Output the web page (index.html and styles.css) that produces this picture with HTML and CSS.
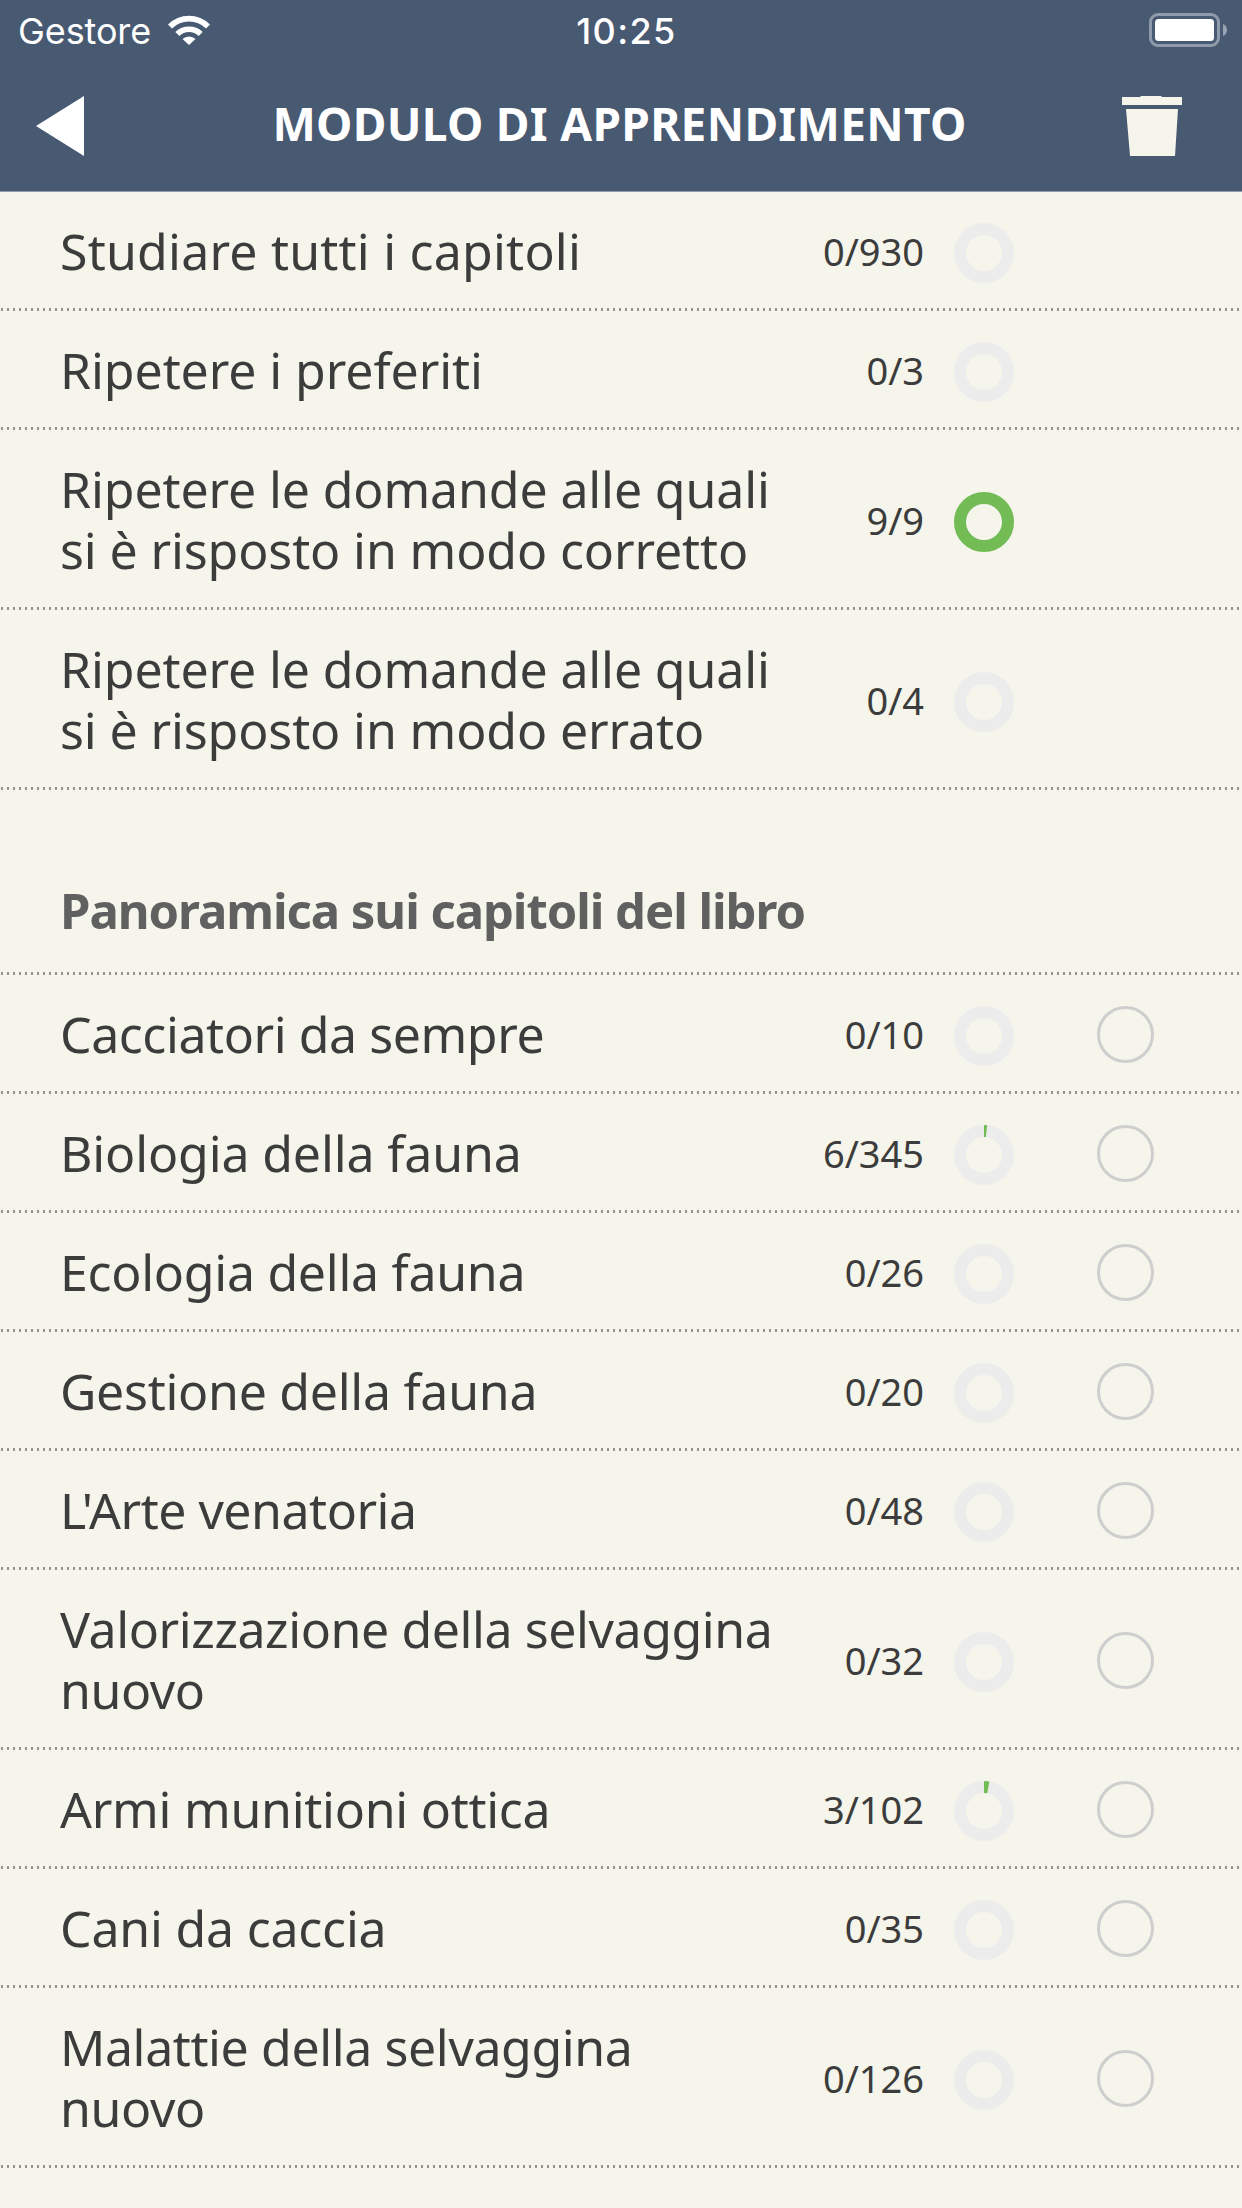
FILE: index.html
```html
<!DOCTYPE html>
<html lang="it">
<head>
    <meta charset="UTF-8">
    <meta name="viewport" content="width=device-width, initial-scale=1.0">
    <title>Modulo di apprendimento</title>
    <link rel="stylesheet" href="styles.css">
</head>
<body>
    <header>
        <div class="status-bar">
            <div class="carrier">
                <span>Gestore</span>
                <svg class="wifi" viewBox="0 0 42 30" width="42" height="30">
                    <path d="M0 9.5A29.5 29.5 0 0 1 42 9.5L38 13.500A24 24 0 0 0 4 13.500Z"/>
                    <path d="M7.300 17A19.500 19.500 0 0 1 34.700 17L30.600 21A13.700 13.700 0 0 0 11.400 21Z"/>
                    <path d="M14.500 24A9.500 9.500 0 0 1 27.500 24L21 30Z"/>
                </svg>
            </div>
            <div class="clock">10:25</div>
            <svg class="battery" viewBox="0 0 78 34" width="78" height="34">
                <rect x="1.500" y="1.500" width="68" height="31" rx="7.500" class="battery-frame"/>
                <rect x="6" y="6" width="59" height="22" rx="3.500" fill="#fff"/>
                <path d="M74 11c2.500 1 4 3.300 4 6s-1.500 5-4 6z" class="battery-tip"/>
            </svg>
        </div>
        <nav>
            <svg class="back" viewBox="0 0 48 60" width="48" height="60"><path d="M48 0v60L0 30z"/></svg>
            <h1>MODULO DI APPRENDIMENTO</h1>
            <svg class="trash" viewBox="0 0 60 60" width="60" height="60">
                <path d="M0 1h18l1-1h20l1 1h20v8H0zM4 13h52l-3 47H8z"/>
            </svg>
        </nav>
    </header>

    <main>
        <ul class="list" id="reviewList"></ul>
        <h2>Panoramica sui capitoli del libro</h2>
        <ul class="list" id="chapterList"></ul>
    </main>

    <script src="script.js"></script>
</body>
</html>
```
FILE: styles.css
```css
body {
    margin: 0;
    height: 2208px;
    overflow: hidden;
    font-family: "Noto Sans", sans-serif;
    background-color: #f5f5eb;
    color: #3c3c3c;
}
header {
    height: 191px;
    background-color: #485972;
    border-bottom: 1px solid #949dab;
    color: #fff;
}
.status-bar {
    display: grid;
    grid-template-columns: 1fr auto 1fr;
    align-items: center;
    height: 60px;
    padding: 0 15px 0 18px;
    font-family: Inter, sans-serif;
    font-size: 36px;
}
.carrier {
    display: flex;
    align-items: center;
    gap: 17px;
    letter-spacing: -0.1px;
}
.carrier span,
.clock {
    padding-top: 2px;
}
.wifi,
.back {
    fill: #fff;
}
.clock {
    padding-left: 8px;
    font-weight: 500;
    letter-spacing: 1.4px;
}
.battery {
    justify-self: end;
}
.battery-frame {
    fill: none;
    stroke: #8f9bab;
    stroke-width: 3;
}
.battery-tip {
    fill: #9aa4b2;
}
nav {
    display: flex;
    align-items: center;
    height: 132px;
    padding: 0 60px 0 36px;
}
h1 {
    flex: 1;
    margin: -6px 0 0;
    padding-left: 33px;
    font-size: 46px;
    line-height: 64px;
    letter-spacing: 0.3px;
    text-align: center;
    white-space: nowrap;
}
.trash {
    fill: #f5f5eb;
}
.list {
    margin: 0;
    padding: 0;
    list-style: none;
}
.list li,
h2 {
    /* dotted line under every row */
    background: repeating-linear-gradient(to right, transparent 0 1px, #92938c 1px 3px, transparent 3px 6px) left bottom / 100% 3px no-repeat;
}
.list li {
    display: flex;
    align-items: center;
    padding: 31px 88px 27px 60px;
}
.name {
    flex: 1;
    margin: -2px 0 2px;
    font-size: 50px;
    line-height: 61px;
    white-space: nowrap;
}
.count {
    margin: -2px 30px 2px 0;
    font-size: 38px;
    line-height: 61px;
}
.ring {
    width: 60px;
    height: 60px;
    margin: 0 83px 1px 0;
    fill: none;
    stroke: #ececec;
    stroke-width: 12;
}
.ring .done {
    stroke: #73bb54;
}
.check {
    box-sizing: border-box;
    width: 57px;
    height: 57px;
    margin-bottom: 4px;
    border: 3px solid #cecece;
    border-radius: 50%;
}
.check.hidden {
    visibility: hidden;
}
h2 {
    margin: 0;
    padding: 90px 60px 34px;
    font-size: 49px;
    line-height: 61px;
    letter-spacing: -1.05px;
    color: #606060;
}
```
FILE: script.js
```js
// name, answered, total, letter spacing of the name in px
const review = [
    ["Studiare tutti i capitoli", 0, 930, 0.22],
    ["Ripetere i preferiti", 0, 3, -0.08],
    ["Ripetere le domande alle quali<br>si è risposto in modo corretto", 9, 9, -0.12],
    ["Ripetere le domande alle quali<br>si è risposto in modo errato", 0, 4, -0.12]
];

const chapters = [
    ["Cacciatori da sempre", 0, 10, -0.43],
    ["Biologia della fauna", 6, 345, -0.14],
    ["Ecologia della fauna", 0, 26, -0.28],
    ["Gestione della fauna", 0, 20, -0.28],
    ["L'Arte venatoria", 0, 48, -0.48],
    ["Valorizzazione della selvaggina<br>nuovo", 0, 32, -0.41],
    ["Armi munitioni ottica", 3, 102, -0.27],
    ["Cani da caccia", 0, 35, -0.2],
    ["Malattie della selvaggina<br>nuovo", 0, 126, -0.39],
    ["Cacciatori di domani<br>nuovo", 0, 20, -0.43]
];

function renderList(id, rows, selectable) {
    document.getElementById(id).innerHTML = rows.map(([name, done, total, spacing]) => `
        <li>
            <span class="name" style="letter-spacing: ${spacing}px">${name}</span>
            <span class="count">${done}/${total}</span>
            <svg class="ring" viewBox="0 0 60 60">
                <circle cx="30" cy="30" r="24"/>
                <circle class="done" cx="30" cy="30" r="24" pathLength="100" stroke-dasharray="${done / total * 100} 100" transform="rotate(-90 30 30)"/>
            </svg>
            <span class="check${selectable ? "" : " hidden"}"></span>
        </li>`).join("");
}

renderList("reviewList", review, false);
renderList("chapterList", chapters, true);
```
